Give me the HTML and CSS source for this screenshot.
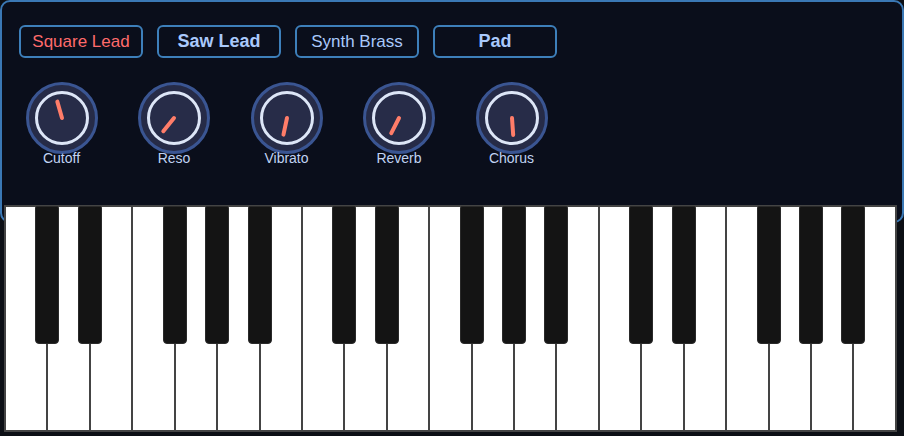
FILE: index.html
```html
<!DOCTYPE html>
<html>
<head>
<meta charset="utf-8">
<link rel="stylesheet" href="styles.css">
</head>
<body>
<div class="synth">
  <div class="panel">
    <div class="presets">
      <button class="preset active">Square Lead</button>
      <button class="preset bold">Saw Lead</button>
      <button class="preset">Synth Brass</button>
      <button class="preset bold">Pad</button>
    </div>
    <div class="knobs">
      <div class="knob">
        <svg class="dial" viewBox="0 0 72 72" width="72" height="72"><circle class="ring" cx="36" cy="36" r="34.5"/><circle class="face" cx="36" cy="36" r="25.5"/><line class="pointer" x1="36" y1="36" x2="36" y2="19" transform="rotate(-16 36 36)"/></svg>
        <span class="label">Cutoff</span>
      </div>
      <div class="knob">
        <svg class="dial" viewBox="0 0 72 72" width="72" height="72"><circle class="ring" cx="36" cy="36" r="34.5"/><circle class="face" cx="36" cy="36" r="25.5"/><line class="pointer" x1="36" y1="36" x2="36" y2="19" transform="rotate(219 36 36)"/></svg>
        <span class="label">Reso</span>
      </div>
      <div class="knob">
        <svg class="dial" viewBox="0 0 72 72" width="72" height="72"><circle class="ring" cx="36" cy="36" r="34.5"/><circle class="face" cx="36" cy="36" r="25.5"/><line class="pointer" x1="36" y1="36" x2="36" y2="19" transform="rotate(192 36 36)"/></svg>
        <span class="label">Vibrato</span>
      </div>
      <div class="knob">
        <svg class="dial" viewBox="0 0 72 72" width="72" height="72"><circle class="ring" cx="36" cy="36" r="34.5"/><circle class="face" cx="36" cy="36" r="25.5"/><line class="pointer" x1="36" y1="36" x2="36" y2="19" transform="rotate(207 36 36)"/></svg>
        <span class="label">Reverb</span>
      </div>
      <div class="knob">
        <svg class="dial" viewBox="0 0 72 72" width="72" height="72"><circle class="ring" cx="36" cy="36" r="34.5"/><circle class="face" cx="36" cy="36" r="25.5"/><line class="pointer" x1="36" y1="36" x2="36" y2="19" transform="rotate(176 36 36)"/></svg>
        <span class="label">Chorus</span>
      </div>
    </div>
  </div>
  <div class="piano">
    <div class="white"><span class="black"></span></div>
    <div class="white"><span class="black"></span></div>
    <div class="white"></div>
    <div class="white"><span class="black"></span></div>
    <div class="white"><span class="black"></span></div>
    <div class="white"><span class="black"></span></div>
    <div class="white"></div>
    <div class="white"><span class="black"></span></div>
    <div class="white"><span class="black"></span></div>
    <div class="white"></div>
    <div class="white"><span class="black"></span></div>
    <div class="white"><span class="black"></span></div>
    <div class="white"><span class="black"></span></div>
    <div class="white"></div>
    <div class="white"><span class="black"></span></div>
    <div class="white"><span class="black"></span></div>
    <div class="white"></div>
    <div class="white"><span class="black"></span></div>
    <div class="white"><span class="black"></span></div>
    <div class="white"><span class="black"></span></div>
    <div class="white"></div>
  </div>
</div>
</body>
</html>
```

FILE: styles.css
```css
html, body {
  margin: 0;
  padding: 0;
  background: #0c0f15;
  font-family: "Liberation Sans", Arial, sans-serif;
}

.synth {
  width: 904px;
  height: 436px;
}

.panel {
  box-sizing: border-box;
  height: 223px;
  border: 2px solid #3a78b5;
  border-radius: 10px;
  background: #0a0e1b;
  padding: 23px 17px 0 17px;
}

.presets {
  display: flex;
  gap: 14px;
}

.preset {
  box-sizing: border-box;
  width: 124px;
  height: 33px;
  margin: 0;
  padding: 0;
  border: 2px solid #3d7fba;
  border-radius: 6px;
  background: transparent;
  color: #a9c9fb;
  font-family: "Liberation Sans", Arial, sans-serif;
  font-size: 17px;
  font-weight: 400;
  line-height: 29px;
  text-align: center;
}

.preset.active {
  color: #ff6b6b;
}

.preset.bold {
  font-size: 18px;
  font-weight: 700;
}

.knobs {
  display: flex;
  gap: 27.5px;
  margin-top: 24px;
}

.knob {
  width: 85px;
  display: flex;
  flex-direction: column;
  align-items: center;
}

.dial {
  display: block;
}

.ring {
  fill: #262b47;
  stroke: #3a5592;
  stroke-width: 3;
}

.face {
  fill: #272c48;
  stroke: #dde6f7;
  stroke-width: 3;
}

.pointer {
  stroke: #ff7d69;
  stroke-width: 4;
  stroke-linecap: round;
}

.label {
  margin-top: -4px;
  font-size: 14px;
  line-height: 16px;
  color: #c0d3f3;
}

.piano {
  display: flex;
  box-sizing: border-box;
  width: 893px;
  height: 227px;
  margin: -18px 0 0 4px;
  border: 1px solid #444444;
  background: #ffffff;
}

.white {
  position: relative;
  flex: 1 1 0;
  border: 1px solid #444444;
  background: #ffffff;
}

.black {
  position: absolute;
  top: -1px;
  right: -13px;
  z-index: 1;
  box-sizing: border-box;
  width: 24px;
  height: 138px;
  background: #141414;
  border: 1px solid #2a2a2a;
  border-radius: 2px 2px 4px 4px;
}
```
